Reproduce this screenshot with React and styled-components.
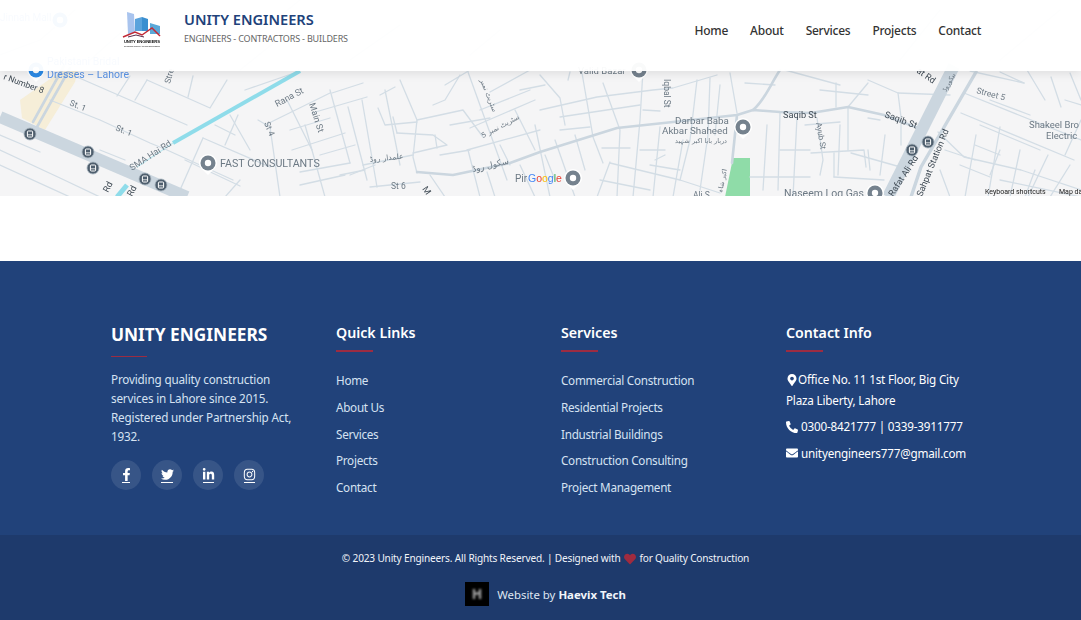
import React from 'react'
import styled, { createGlobalStyle } from 'styled-components'
import {
  FaFacebookF,
  FaTwitter,
  FaLinkedinIn,
  FaInstagram,
  FaMapMarkerAlt,
  FaPhoneAlt,
  FaEnvelope,
  FaHeart,
} from 'react-icons/fa'

const GlobalStyle = createGlobalStyle`
  * { box-sizing: border-box; }
  html, body { margin: 0; padding: 0; background: #fff; }
  body { font-family: "Noto Sans", "Open Sans", sans-serif; }
  ul { list-style: none; margin: 0; padding: 0; }
  h2, h3, p { margin: 0; }
`

const Page = styled.div`
  position: relative;
  width: 1081px;
  height: 620px;
  overflow: hidden;
`

const Header = styled.header`
  position: absolute;
  top: 0;
  left: 0;
  right: 0;
  height: 71px;
  display: flex;
  align-items: center;
  justify-content: space-between;
  padding: 0 100px 11px 122px;
  background: rgba(255, 255, 255, 0.955);
  box-shadow: 0 2px 10px rgba(0, 0, 0, 0.1);
`

const Brand = styled.div`
  display: flex;
  align-items: center;
  gap: 22px;
`

const BrandText = styled.div`
  display: flex;
  flex-direction: column;
  gap: 3px;
  padding-bottom: 6px;
`

const BrandName = styled.div`
  font-size: 14.6px;
  line-height: 20px;
  font-weight: 600;
  color: #21427a;
`

const BrandTag = styled.div`
  font-size: 9px;
  line-height: 13px;
  letter-spacing: -0.18px;
  color: #666;
`

const Nav = styled.nav`
  display: flex;
  gap: 22px;
`

const NavLink = styled.a`
  font-size: 12px;
  font-weight: 500;
  letter-spacing: -0.25px;
  color: #333;
`

const MapArea = styled.section`
  height: 196px;
  background: #f5f5f6;
  overflow: hidden;
`

const Spacer = styled.div`
  height: 65px;
  background: #fff;
`

const Footer = styled.footer`
  background: #21427a;
  color: #fff;
`

const FooterGrid = styled.div`
  display: grid;
  grid-template-columns: repeat(4, 225px);
  height: 274px;
  padding: 62px 0 0 111px;
`

const Column = styled.div`
  padding-right: 30px;
`

const BrandTitle = styled.h2`
  font-size: 17.3px;
  line-height: 24px;
  font-weight: 700;
  white-space: nowrap;

  &::after {
    content: '';
    display: block;
    width: 36px;
    height: 1px;
    margin-top: 9px;
    background: #9c2c42;
  }
`

const About = styled.p`
  margin-top: 13px;
  font-size: 11.7px;
  line-height: 19px;
  letter-spacing: -0.17px;
  color: #d6e2f2;
`

const Socials = styled.div`
  display: flex;
  gap: 11px;
  margin-top: 14px;
`

const Social = styled.a`
  width: 30px;
  height: 30px;
  border-radius: 50%;
  display: flex;
  align-items: center;
  justify-content: center;
  background: rgba(255, 255, 255, 0.1);
  color: #fff;
  font-size: 13px;
`

const SocialGlyph = styled.span`
  width: ${props => props.$width}px;
  display: flex;
  justify-content: center;
  padding-bottom: 1px;
  border-bottom: 1px solid #fff;

  svg {
    flex-shrink: 0;
    display: block;
  }
`

const ColumnTitle = styled.h3`
  font-size: 14.2px;
  line-height: 20px;
  font-weight: 600;

  &::after {
    content: '';
    display: block;
    width: 37px;
    height: 2px;
    margin-top: 7px;
    background: #9c2c42;
  }
`

const LinkList = styled.ul`
  margin-top: 15px;
`

const LinkItem = styled.li`
  height: 26.8px;
  font-size: 11.7px;
  line-height: 26.8px;
  letter-spacing: -0.27px;
  color: #d6e2f2;
  white-space: nowrap;
`

const ContactList = styled.div`
  margin-top: 17px;
  color: #fff;
  font-size: 11.7px;
  letter-spacing: -0.2px;
`

const ContactRow = styled.p`
  line-height: 20.5px;
  margin-bottom: ${props => props.$gap}px;

  svg {
    font-size: 12px;
    vertical-align: -1.5px;
    margin-right: ${props => props.$iconGap}px;
  }
`

const BottomBar = styled.div`
  height: 85px;
  background: #1e3a6c;
  display: flex;
  flex-direction: column;
  align-items: center;
  padding: 15px 0 0 10px;
`

const Copyright = styled.p`
  font-size: 10.1px;
  line-height: 16px;
  letter-spacing: -0.17px;
  color: #f1f4f9;

  svg {
    color: #a02b3f;
    font-size: 12px;
    vertical-align: -2.5px;
    margin: 0 1px;
  }
`

const Credit = styled.div`
  display: flex;
  align-items: center;
  gap: 8px;
  margin-top: 16px;
  font-size: 11.4px;
  color: #dfe6f1;

  b {
    font-weight: 700;
    color: #f2f5fa;
  }
`

const CreditLogo = styled.svg`
  width: 24px;
  height: 24px;
  display: block;
`

const LogoMark = styled.svg`
  width: 40px;
  height: 36px;
  display: block;
  filter: blur(0.4px);
`

const MapSvg = styled.svg`
  display: block;
  font-family: Roboto, "DejaVu Sans", sans-serif;
  filter: blur(0.35px);
`

const minorRoads = [
  'M77 77L187 125', 'M147 80L210 108L227 80', 'M147 80L135 100', 'M193 76L188 97', 'M130 76L117 96',
  'M50 100L100 120L150 143L167 150L233 180', 'M203 138L180 190', 'M203 138L270 167', 'M0 165L70 197',
  'M240 180L225 197', 'M258 120L270 127L280 197', 'M230 115L250 150', 'M245 103L265 90', 'M225 145L238 115',
  'M245 90L300 71', 'M265 125L330 93', 'M305 125L325 197', 'M287 100L312 150', 'M330 90L350 163',
  'M348 107L367 180', 'M362 100L377 187', 'M312 113L367 97', 'M332 93L363 83', 'M400 80L417 120L413 157L417 173',
  'M417 120L463 110L483 137', 'M397 133L433 135L447 145L413 153', 'M393 117L397 133', 'M378 108L385 125L417 122',
  'M435 135L437 148', 'M363 165L413 155', 'M350 163L300 172', 'M350 175L375 165', 'M340 175L365 170',
  'M460 75L445 100L433 105', 'M470 70L445 85', 'M468 72L507 180', 'M490 92L530 70', 'M480 110L530 90', 'M470 128L535 100',
  'M450 125L490 118', 'M467 150L540 130', 'M468 150L480 197', 'M430 175L445 197', 'M370 187L420 182', 'M487 172L495 197',
  'M540 110L597 97L653 90L673 88L717 75', 'M560 117L640 105', 'M582 73L593 137L603 163', 'M603 83L620 130L617 197',
  'M610 162L597 197', 'M610 163L680 180L720 193', 'M643 70L640 120L633 197', 'M660 127L653 197', 'M683 140L673 197',
  'M697 80L690 140L680 180', 'M710 78L708 135L700 190', 'M730 73L737 113', 'M570 72L568 80', 'M540 75L560 98L565 125',
  'M520 90L545 85', 'M560 130L590 127', 'M545 155L555 180', 'M602 148L630 148', 'M643 110L660 111', 'M665 155L655 160',
  'M767 125L763 190', 'M780 113L778 190', 'M750 177L810 177', 'M797 117L793 197', 'M745 83L775 85', 'M785 70L840 85',
  'M836 83L836 107', 'M868 83L848 107L848 150', 'M868 80L898 93L950 95', 'M898 93L901 117L901 145', 'M851 153L911 170',
  'M834 177L884 180', 'M811 153L864 150L866 167', 'M834 153L834 177', 'M868 150L870 170', 'M817 118L823 160L820 175',
  'M868 118L880 120', 'M964 93L1081 140', 'M961 113L1074 160', 'M1000 127L988 197', 'M1020 150L1010 197',
  'M938 132L964 157L1021 170L1081 190', 'M976 135L965 197', 'M975 145L1000 155', 'M1024 83L970 71', 'M1051 77L1061 107',
  'M1027 70L1045 100', 'M1070 73L1081 100', 'M1000 180L1081 197', 'M1048 155L1028 197', 'M1070 165L1050 197',
  'M1081 120L1065 155', 'M940 170L950 197',
  // denser side streets in the blocks
  'M0 135L40 152', 'M0 150L60 178L100 197', 'M100 150L125 160', 'M185 160L240 186', 'M215 125L235 135', 'M380 95L395 87',
  'M290 130L330 118', 'M292 150L345 133', 'M320 155L355 145', 'M300 185L345 175', 'M385 90L400 165', 'M440 155L470 150',
  'M520 165L535 197', 'M500 145L510 165', 'M515 110L535 150', 'M535 125L550 197', 'M555 140L575 197', 'M575 135L585 170',
  'M600 180L650 190', 'M640 150L665 150', 'M650 165L680 170', 'M720 85L715 135', 'M805 125L840 122', 'M780 150L810 150',
  'M840 125L838 175', 'M885 135L880 175', 'M980 125L1040 150', 'M1035 170L1025 197', 'M1065 100L1081 105', 'M990 100L1030 115',
  'M1000 72L1024 83', 'M960 165L990 177', 'M945 150L975 160', 'M1000 150L990 175', 'M820 90L868 95',
  // faint behind the header
  'M0 55L40 40L75 10', 'M90 60L135 20', 'M250 40L300 0', 'M240 70L290 30', 'M350 60L400 25', 'M470 55L500 30', 'M1000 60L1060 10',
  'M900 60L940 10',
]

const labels = [
  { x: 0, y: 21, text: 'Jinnah Mall', fill: '#5b94e6', size: 10 },
  { x: 47, y: 65, text: 'Pakistani Bridal', fill: '#5b94e6', size: 10.5 },
  { x: 47, y: 78, text: 'Dresses – Lahore', fill: '#5b94e6', size: 10.5 },
  { x: 69, y: 105, text: 'St. 1', rotate: 22, size: 8.5 },
  { x: 115, y: 130, text: 'St. 1', rotate: 22, size: 8.5 },
  { x: 3, y: 79, text: 'r Number 8', rotate: 20, size: 8.5, dark: true },
  { x: 132, y: 171, text: 'SMA Hai Rd', rotate: -33, size: 9 },
  { x: 277, y: 107, text: 'Rana St', rotate: -28, size: 9 },
  { x: 309, y: 104, text: 'Main St', rotate: 72, size: 9 },
  { x: 264, y: 123, text: 'St 4', rotate: 68, size: 8.5 },
  { x: 220, y: 167, text: 'FAST CONSULTANTS', size: 10.7 },
  { x: 391, y: 189, text: 'St 6', size: 8.5 },
  { x: 422, y: 189, text: 'M', rotate: 55, size: 9, dark: true },
  { x: 170, y: 84, text: 'Stre', rotate: -75, size: 8.5 },
  { x: 108, y: 193, text: 'Rd', rotate: -62, size: 9, dark: true },
  { x: 132, y: 197, text: 'Rd', rotate: -62, size: 9, dark: true },
  { x: 515, y: 182, text: 'Pir', size: 10 },
  { x: 578, y: 74, text: 'Valid Bazar', size: 9.5 },
  { x: 664, y: 79, text: 'Iqbal St', rotate: 90, size: 8.5 },
  { x: 675, y: 124, text: 'Darbar Baba', size: 9.8 },
  { x: 662, y: 134, text: 'Akbar Shaheed', size: 9.8 },
  { x: 693, y: 198, text: 'Ali S', size: 8.5 },
  { x: 783, y: 118, text: 'Saqib St', size: 9.2, dark: true },
  { x: 884, y: 117, text: 'Saqib St', rotate: 20, size: 9.2, dark: true },
  { x: 816, y: 123, text: 'Ayub St', rotate: 80, size: 8 },
  { x: 916, y: 72, text: 'at Rd', rotate: 35, size: 9, dark: true },
  { x: 976, y: 93, text: 'Street 5', rotate: 15, size: 8.5 },
  { x: 1029, y: 128, text: 'Shakeel Bro', size: 9.5 },
  { x: 1046, y: 139, text: 'Electric', size: 9.5 },
  { x: 893, y: 197, text: 'Rafat Ali Rd', rotate: -57, size: 9, dark: true },
  { x: 922, y: 197, text: 'Sahpat Station Rd', rotate: -68, size: 9, dark: true },
  { x: 784, y: 197, text: 'Naseem Log Gas', size: 10.5 },
]

const urduLabels = [
  { x: 370, y: 162, text: 'علمدار روڈ', rotate: -6, size: 7.5 },
  { x: 483, y: 138, text: 'سٹریٹ نمبر 5', rotate: -28, size: 7 },
  { x: 480, y: 80, text: 'سٹریٹ نمبر', rotate: 68, size: 7 },
  { x: 473, y: 172, text: 'سکول روڈ', rotate: -13, size: 8.5 },
  { x: 675, y: 143, text: 'دربار بابا اکبر شہید', size: 6.5 },
  { x: 722, y: 193, text: 'اکبر شاہ', rotate: -78, size: 6.5 },
  { x: 946, y: 92, text: 'بیکوروڈ', rotate: -62, size: 6.5 },
]

const pins = [
  { x: 208, y: 163 },
  { x: 573, y: 178 },
  { x: 639, y: 70 },
  { x: 743, y: 127 },
  { x: 875, y: 193 },
  { x: 36, y: 70, fill: '#2d8be6' },
  { x: 60, y: 20, fill: '#2d8be6' },
]

const buses = [
  [30, 134], [88, 152], [93, 168], [145, 179], [161, 185], [912, 150], [928, 142],
]

const Pin = ({ x, y, fill = '#75828e' }) => (
  <g transform={`translate(${x} ${y})`}>
    <path d="M-9 0a9 9 0 1 1 18 0c0 4-3 6-5 8l-4 4-4-4c-2-2-5-4-5-8z" fill="#fff" />
    <circle r="7.5" fill={fill} />
    <circle r="3.2" fill="#fff" />
  </g>
)

const Bus = ({ x, y }) => (
  <g transform={`translate(${x} ${y})`}>
    <circle r="6" fill="#4f5f6e" stroke="#aab6c0" strokeWidth="0.8" />
    <rect x="-2.6" y="-3" width="5.2" height="6" rx="1" fill="none" stroke="#fff" strokeWidth="1" />
    <path d="M-2.6 0.8H2.6" stroke="#fff" strokeWidth="0.8" />
  </g>
)

const MapLabel = ({ x, y, text, rotate = 0, size, fill, dark, family }) => (
  <text
    x={x}
    y={y}
    fontSize={size}
    fontFamily={family}
    fill={fill || (dark ? '#3f4a54' : '#6c7984')}
    transform={rotate ? `rotate(${rotate} ${x} ${y})` : undefined}
  >
    {text}
  </text>
)

const StreetMap = () => (
  <MapSvg width="1081" height="196" viewBox="0 0 1081 196">
    <rect width="1081" height="196" fill="#f5f5f6" />
    <path d="M20 100L60 72L78 70L75 82L45 130L22 118Z" fill="#f6eed8" />
    <path d="M733 158L750 158L750 197L725 197Z" fill="#8fdca8" />
    <g fill="none" stroke="#d3dde5" strokeWidth="1.3" strokeLinecap="round" strokeLinejoin="round">
      {minorRoads.map(d => (
        <path key={d} d={d} />
      ))}
    </g>
    <g fill="none" stroke="#cbd6df" strokeLinecap="round" strokeLinejoin="round">
      <path d="M417 172L453 175L510 163L540 152L617 128L673 122L737 115L753 110L780 112L811 113L848 107L884 115L918 128" strokeWidth="2.6" />
      <path d="M753 110C765 100 770 85 780 70" strokeWidth="2.6" />
      <path d="M737 115L732 163" strokeWidth="2.6" />
      <path d="M976 72L921 167L911 197" strokeWidth="3.4" />
      <path d="M70 68L37 127M64 66L33 122" strokeWidth="2.6" />
      <path d="M0 117L187 197" strokeWidth="12" strokeLinecap="butt" />
      <path d="M954 66L888 197" strokeWidth="12" strokeLinecap="butt" />
    </g>
    <path d="M300 71L173 143" stroke="#8fdcea" strokeWidth="4" fill="none" />
    <path d="M173 143L137 167" stroke="#c0e8f0" strokeWidth="1.4" fill="none" />
    <path d="M127 185L117 197" stroke="#8fdcea" strokeWidth="5" fill="none" />
    {labels.map(label => (
      <MapLabel key={label.text + label.x} {...label} />
    ))}
    {urduLabels.map(label => (
      <MapLabel key={label.text} family="'DejaVu Sans', sans-serif" {...label} />
    ))}
    {pins.map(pin => (
      <Pin key={pin.x} {...pin} />
    ))}
    {buses.map(([x, y]) => (
      <Bus key={x} x={x} y={y} />
    ))}
    <text x="528" y="182" fontSize="10.5" fontFamily="'Liberation Sans', sans-serif">
      <tspan fill="#4285f4">G</tspan>
      <tspan fill="#ea4335">o</tspan>
      <tspan fill="#fbbc05">o</tspan>
      <tspan fill="#4285f4">g</tspan>
      <tspan fill="#34a853">l</tspan>
      <tspan fill="#ea4335">e</tspan>
    </text>
    <text x="985" y="194" fontSize="7" fill="#222">Keyboard shortcuts</text>
    <text x="1059" y="194" fontSize="7" fill="#222">Map data</text>
  </MapSvg>
)

const Logo = () => (
  <LogoMark viewBox="0 0 40 36">
    <path d="M5 0L12 2L13 21L6 22Z" fill="#a9c4ee" />
    <path d="M13 7L20 5V19H13Z" fill="#5aa3dc" />
    <path d="M20 5L26 7V19H20Z" fill="#3a8fd0" />
    <path d="M28 11L38 14V22H28Z" fill="#5aa8d8" />
    <path d="M1 25L13 20L20 23L30 16L38 24" fill="none" stroke="#c22a36" strokeWidth="1.5" />
    <path d="M6 25L14 23L22 25" fill="none" stroke="#5a2a4a" strokeWidth="1" />
    <text x="2" y="30.5" fontSize="4.2" fontWeight="700" fontFamily="'Liberation Sans', sans-serif" fill="#111" textLength="36">UNITY ENGINEERS</text>
    <text x="2" y="35" fontSize="2.2" fontFamily="'Liberation Sans', sans-serif" fill="#444" textLength="36">BUILDERS CONTRACTORS ENGINEERS</text>
  </LogoMark>
)

const quickLinks = ['Home', 'About Us', 'Services', 'Projects', 'Contact']
const services = [
  'Commercial Construction',
  'Residential Projects',
  'Industrial Buildings',
  'Construction Consulting',
  'Project Management',
]
const navItems = ['Home', 'About', 'Services', 'Projects', 'Contact']

const socialLinks = [
  { name: 'facebook', Icon: FaFacebookF, width: 8 },
  { name: 'twitter', Icon: FaTwitter, width: 12 },
  { name: 'linkedin', Icon: FaLinkedinIn, width: 11 },
  { name: 'instagram', Icon: FaInstagram, width: 11 },
]

const App = () => (
  <Page>
    <GlobalStyle />
    <MapArea>
      <StreetMap />
    </MapArea>
    <Header>
      <Brand>
        <Logo />
        <BrandText>
          <BrandName>UNITY ENGINEERS</BrandName>
          <BrandTag>ENGINEERS - CONTRACTORS - BUILDERS</BrandTag>
        </BrandText>
      </Brand>
      <Nav>
        {navItems.map(item => (
          <NavLink key={item}>{item}</NavLink>
        ))}
      </Nav>
    </Header>
    <Spacer />
    <Footer>
      <FooterGrid>
        <Column>
          <BrandTitle>UNITY ENGINEERS</BrandTitle>
          <About>
            Providing quality construction services in Lahore since 2015. Registered under
            Partnership Act, 1932.
          </About>
          <Socials>
            {socialLinks.map(({ name, Icon, width }) => (
              <Social key={name}>
                <SocialGlyph $width={width}><Icon /></SocialGlyph>
              </Social>
            ))}
          </Socials>
        </Column>
        <Column>
          <ColumnTitle>Quick Links</ColumnTitle>
          <LinkList>
            {quickLinks.map(item => (
              <LinkItem key={item}>{item}</LinkItem>
            ))}
          </LinkList>
        </Column>
        <Column>
          <ColumnTitle>Services</ColumnTitle>
          <LinkList>
            {services.map(item => (
              <LinkItem key={item}>{item}</LinkItem>
            ))}
          </LinkList>
        </Column>
        <Column>
          <ColumnTitle>Contact Info</ColumnTitle>
          <ContactList>
            <ContactRow $gap={6} $iconGap={0}>
              <FaMapMarkerAlt />Office No. 11 1st Floor, Big City Plaza Liberty, Lahore
            </ContactRow>
            <ContactRow $gap={6} $iconGap={3}>
              <FaPhoneAlt />0300-8421777 | 0339-3911777
            </ContactRow>
            <ContactRow $gap={0} $iconGap={3}>
              <FaEnvelope />unityengineers777@gmail.com
            </ContactRow>
          </ContactList>
        </Column>
      </FooterGrid>
      <BottomBar>
        <Copyright>
          © 2023 Unity Engineers. All Rights Reserved. | Designed with <FaHeart /> for Quality Construction
        </Copyright>
        <Credit>
          <CreditLogo viewBox="0 0 24 24">
            <rect width="24" height="24" fill="#000" />
            <path d="M9 7V17M15 7V17M9 12L15 11" stroke="#9a9a9a" strokeWidth="2.4" fill="none" filter="blur(0.8px)" />
          </CreditLogo>
          <span>Website by <b>Haevix Tech</b></span>
        </Credit>
      </BottomBar>
    </Footer>
  </Page>
)

export default App
